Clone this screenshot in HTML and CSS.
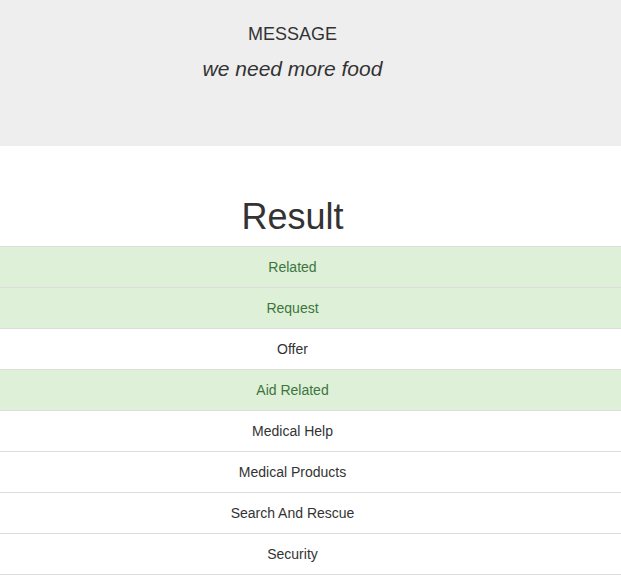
FILE: index.html
```html
<!DOCTYPE html>
<html>
<head>
<meta charset="utf-8">
<link rel="stylesheet" href="styles.css">
</head>
<body>
<div class="jumbotron">
  <div class="inner">
    <h2 class="label">MESSAGE</h2>
    <p class="message">we need more food</p>
  </div>
</div>
<div class="results">
  <h1 class="title">Result</h1>
  <ul class="list-group">
    <li class="item success">Related</li>
    <li class="item success">Request</li>
    <li class="item">Offer</li>
    <li class="item success">Aid Related</li>
    <li class="item">Medical Help</li>
    <li class="item">Medical Products</li>
    <li class="item">Search And Rescue</li>
    <li class="item">Security</li>
  </ul>
</div>
</body>
</html>
```

FILE: styles.css
```css
html, body {
  margin: 0;
  padding: 0;
}
body {
  font-family: "Liberation Sans", Arial, sans-serif;
  font-size: 14px;
  line-height: 20px;
  color: #333;
  background: #fff;
}
.jumbotron {
  background: #eee;
  height: 146px;
  box-sizing: border-box;
  padding-top: 25px;
}
.inner {
  width: 585px;
  text-align: center;
}
.label {
  margin: 0;
  font-size: 18px;
  font-weight: normal;
  line-height: 19.8px;
}
.message {
  margin: 9px 0 0;
  font-size: 21px;
  font-style: italic;
  line-height: 30px;
}
.results {
  padding-top: 51px;
}
.title {
  width: 585px;
  margin: 0 0 9px;
  text-align: center;
  font-size: 36px;
  font-weight: normal;
  line-height: 40px;
}
.list-group {
  list-style: none;
  margin: 0;
  padding: 0;
}
.item {
  padding: 10px 36px 10px 0;
  text-align: center;
  border-top: 1px solid #ddd;
}
.item:last-child {
  border-bottom: 1px solid #ddd;
}
.success {
  background: #dff0d8;
  color: #3c763d;
}
```
